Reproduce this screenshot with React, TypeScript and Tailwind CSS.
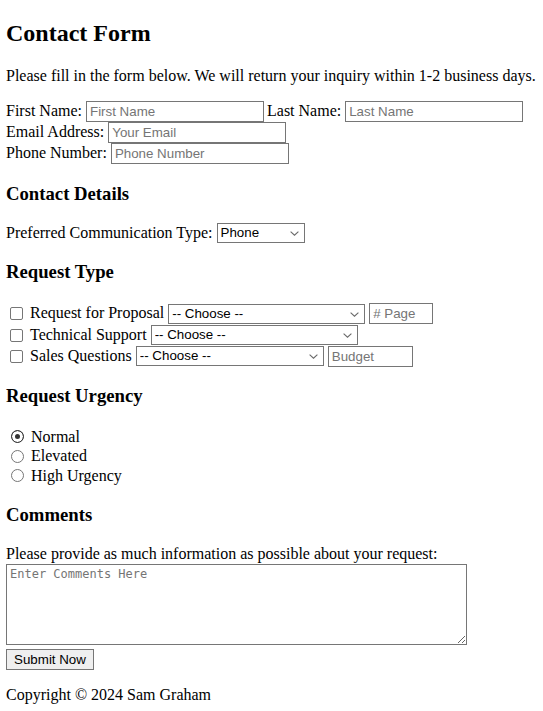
import { useState } from "react";

const field =
  "h-[21px] border border-[#767676] bg-white pl-[3px] pr-[2px] font-['Liberation_Sans',Arial,sans-serif] text-[13.33px] text-black outline-none placeholder:text-[#757575]";

function Select({ width, options, value }: { width: string; options: string[]; value?: string }) {
  const [v, setV] = useState(value ?? options[0]);
  return (
    <span className={`relative inline-flex ${width}`}>
      <select
        value={v}
        onChange={(e) => setV(e.target.value)}
        className="h-[20px] w-full appearance-none rounded-none border border-[#767676] bg-white pl-[3px] pr-[18px] font-['Liberation_Sans',Arial,sans-serif] text-[13.33px] leading-[18px] text-black outline-none"
      >
        {options.map((o) => (
          <option key={o}>{o}</option>
        ))}
      </select>
      <svg
        className="pointer-events-none absolute right-[6px] top-[8px]"
        width="9"
        height="5"
        viewBox="0 0 9 5"
        fill="none"
      >
        <path d="M0.6 0.6 L4.5 4.2 L8.4 0.6" stroke="#6a6a6a" strokeWidth="1.1" />
      </svg>
    </span>
  );
}

const check =
  "ml-[4px] mr-[3px] h-[13px] w-[13px] shrink-0 appearance-none rounded-[2px] border border-[#767676] bg-white";
const radio =
  "ml-[5px] mr-[3px] h-[13px] w-[13px] shrink-0 appearance-none rounded-full border border-[#767676] bg-white checked:border-[#333] checked:bg-[#333] checked:shadow-[inset_0_0_0_3px_white]";

const heading = "mt-[18.7px] text-[18.72px] font-bold leading-[21.5px]";

export default function App() {
  const [urgency, setUrgency] = useState("normal");
  const choose = ["-- Choose --", "Option A", "Option B"];

  return (
    <div className="min-h-screen bg-white px-[6px] pb-[8px] font-['Liberation_Serif','Times_New_Roman',serif] text-[16px] text-black">
      <h1 className="pt-[20px] text-[24px] font-bold leading-[27.6px]">Contact Form</h1>
      <p className="mt-[19.9px] leading-[18.4px]">
        Please fill in the form below. We will return your inquiry within 1-2 business days.
      </p>

      <div className="mt-[15px] leading-[18.4px]">
        <div className="flex h-[21px] items-center gap-[4px]">
          <label>First Name:</label>
          <input className={`${field} w-[178px]`} placeholder="First Name" />
          <label className="ml-[-1px]">Last Name:</label>
          <input className={`${field} w-[178px]`} placeholder="Last Name" />
        </div>
        <div className="flex h-[21px] items-center gap-[4px]">
          <label>Email Address:</label>
          <input className={`${field} w-[178px]`} placeholder="Your Email" />
        </div>
        <div className="flex h-[21px] items-center gap-[4px]">
          <label>Phone Number:</label>
          <input className={`${field} w-[178px]`} placeholder="Phone Number" />
        </div>
      </div>

      <h2 className={heading}>Contact Details</h2>
      <div className="mt-[18.7px] flex h-[20px] items-center gap-[4px] leading-[18.4px]">
        <label>Preferred Communication Type:</label>
        <Select width="w-[88px]" options={["Phone", "Email", "Text"]} />
      </div>

      <h2 className={heading}>Request Type</h2>
      <div className="mt-[19.7px] leading-[18.4px]">
        <div className="flex h-[22px] items-center">
          <input type="checkbox" className={check} />
          <label className="ml-[4px] mr-[4px]">Request for Proposal</label>
          <Select width="w-[197px]" options={choose} />
          <input className={`${field} ml-[4px] w-[64px]`} placeholder="# Page" />
        </div>
        <div className="flex h-[21px] items-center">
          <input type="checkbox" className={check} />
          <label className="ml-[4px] mr-[4px]">Technical Support</label>
          <Select width="w-[207px]" options={choose} />
        </div>
        <div className="flex h-[21px] items-center">
          <input type="checkbox" className={check} />
          <label className="ml-[4px] mr-[4px]">Sales Questions</label>
          <Select width="w-[188px]" options={choose} />
          <input className={`${field} ml-[4px] w-[85px]`} placeholder="Budget" />
        </div>
      </div>

      <h2 className={heading}>Request Urgency</h2>
      <div className="mt-[20.4px] leading-[18.4px]">
        {[
          ["normal", "Normal"],
          ["elevated", "Elevated"],
          ["high", "High Urgency"],
        ].map(([val, text]) => (
          <div key={val} className="flex h-[19.5px] items-center">
            <input
              type="radio"
              name="urgency"
              className={radio}
              checked={urgency === val}
              onChange={() => setUrgency(val)}
            />
            <label className="ml-[4px]">{text}</label>
          </div>
        ))}
      </div>

      <h2 className={heading}>Comments</h2>
      <p className="mt-[18.7px] leading-[18.4px]">
        Please provide as much information as possible about your request:
      </p>
      <textarea
        className="mt-[1px] block h-[81px] w-[461px] resize border border-[#767676] bg-white px-[3px] py-[2px] font-['DejaVu_Sans_Mono',monospace] text-[12px] leading-[15px] outline-none placeholder:text-[#757575]"
        placeholder="Enter Comments Here"
      />
      <button className="mt-[4px] block h-[21px] w-[88px] border border-[#767676] bg-[#efefef] font-['Liberation_Sans',Arial,sans-serif] text-[13.33px] text-black">
        Submit Now
      </button>

      <p className="mt-[16px] leading-[18.4px]">Copyright © 2024 Sam Graham</p>
    </div>
  );
}
